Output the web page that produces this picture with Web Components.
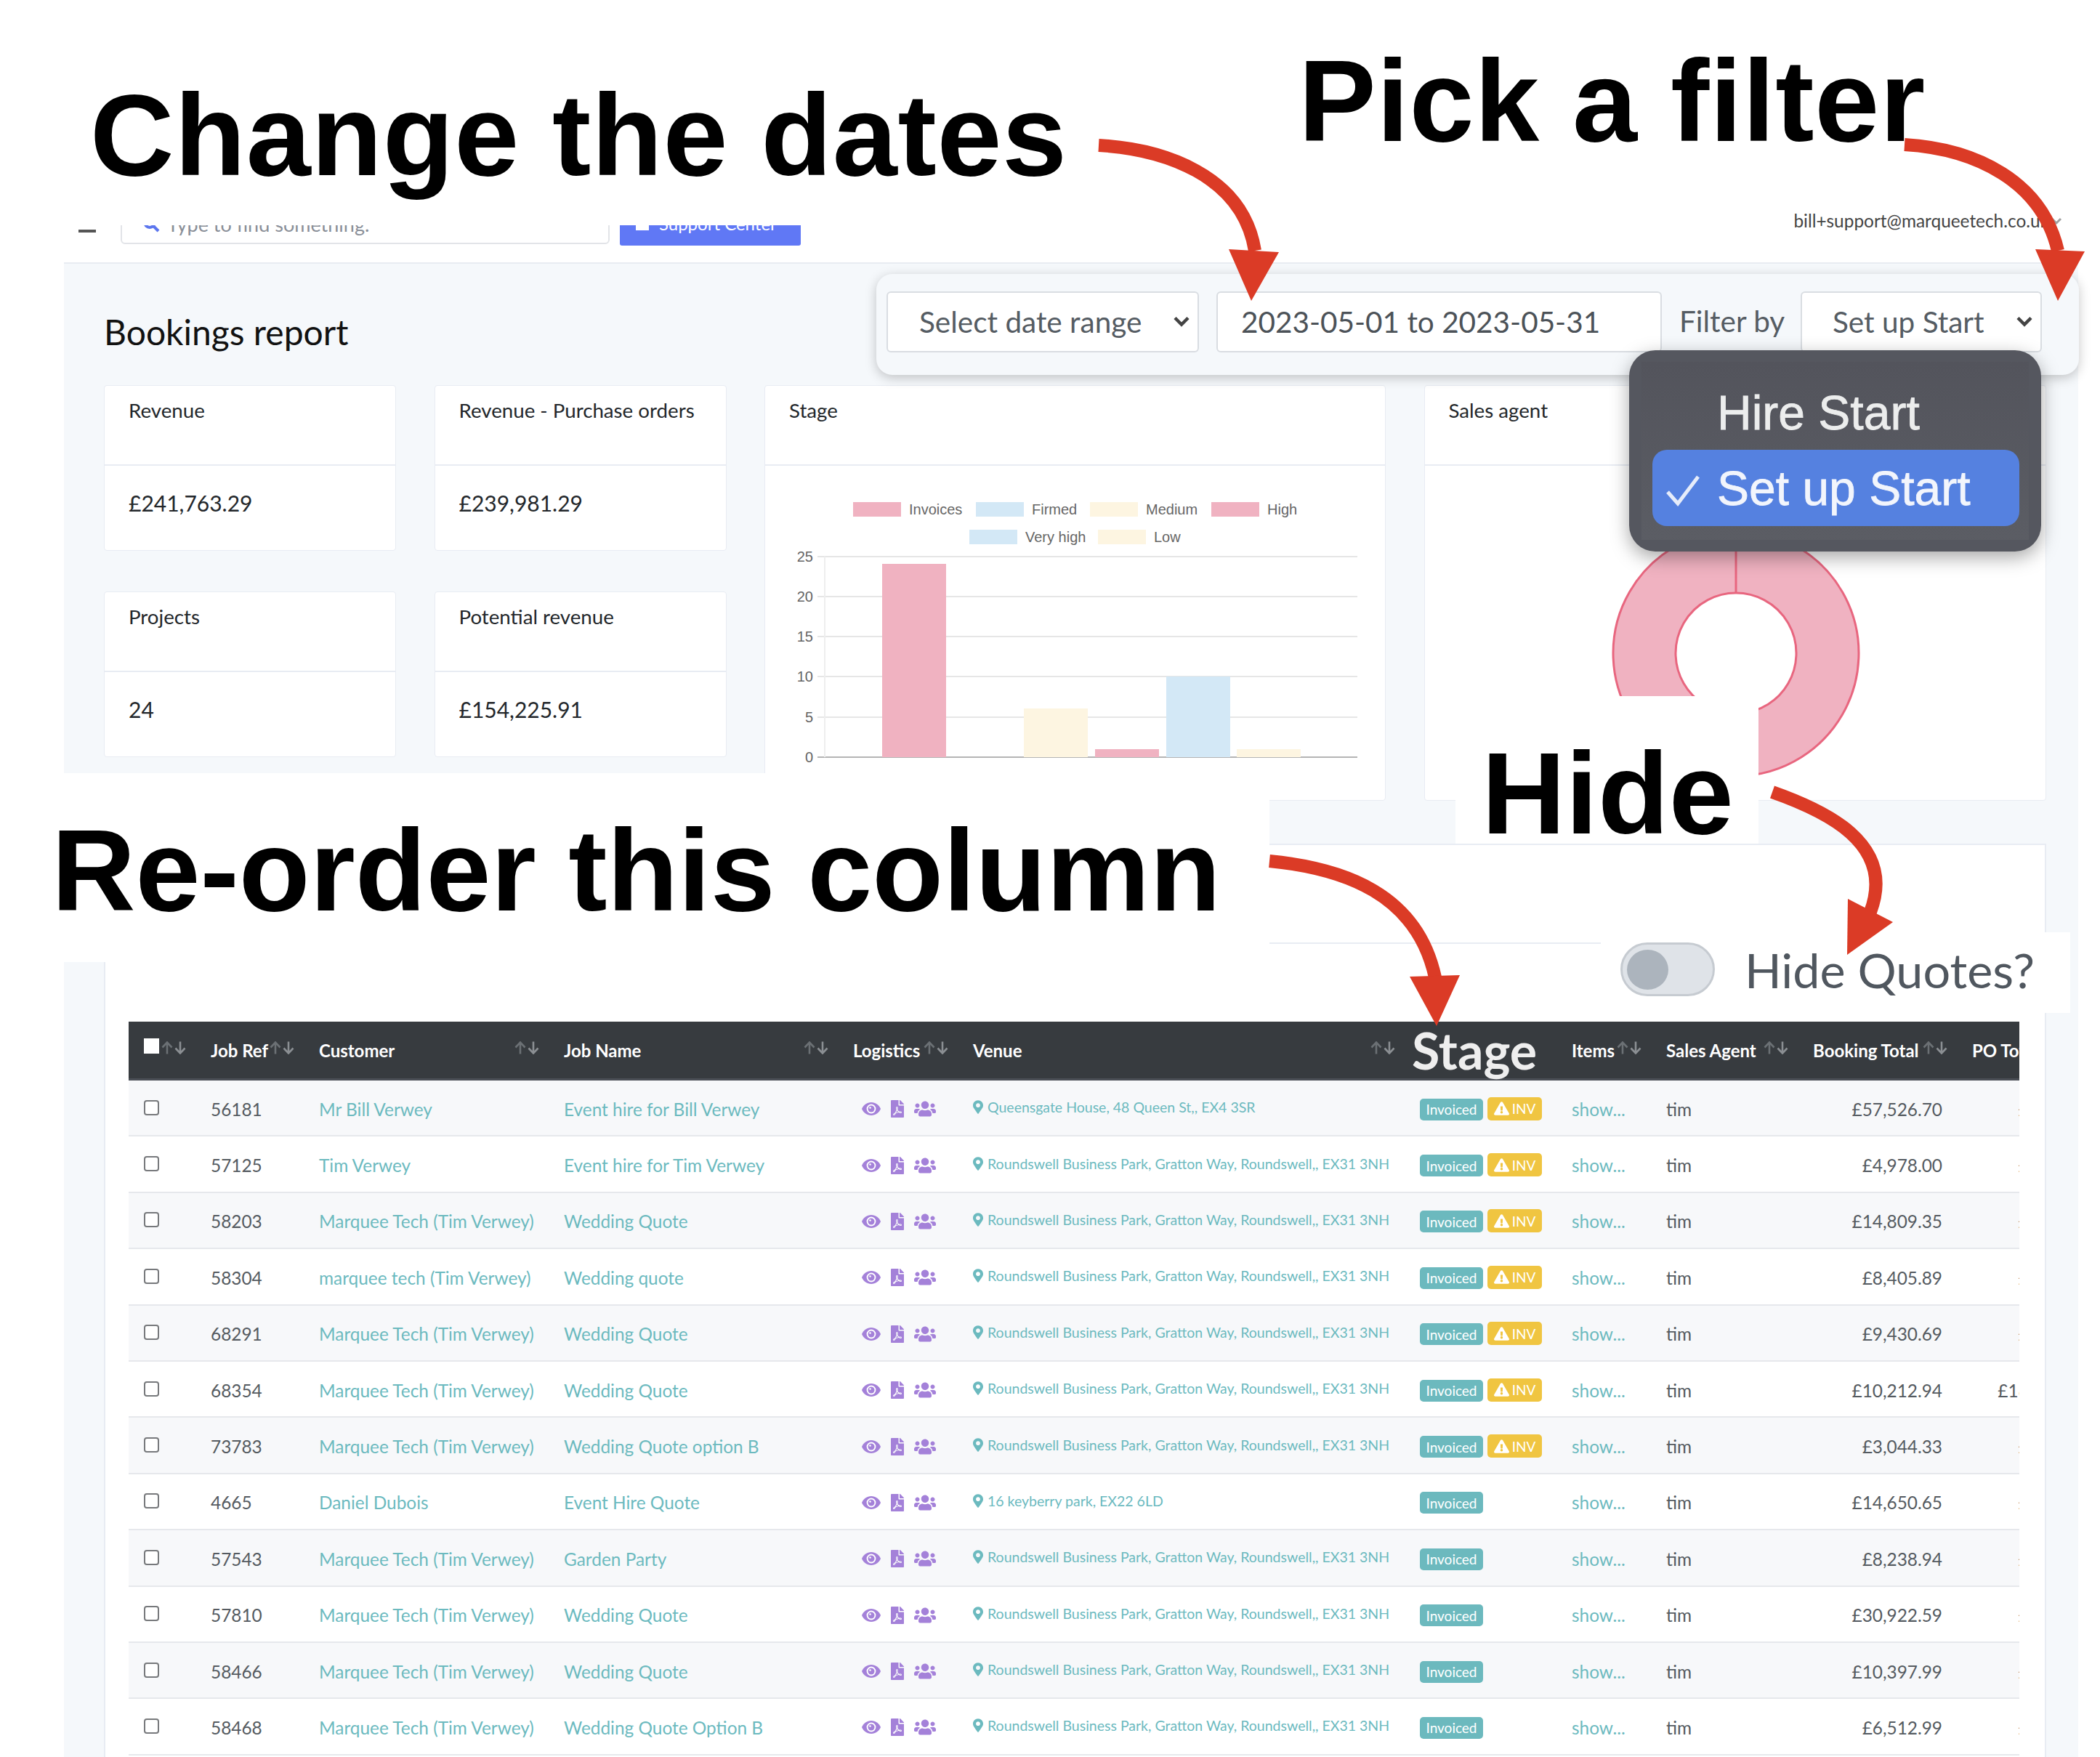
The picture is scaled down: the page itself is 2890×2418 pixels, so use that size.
<!DOCTYPE html>
<html lang="en">
<head>
<meta charset="utf-8">
<title>Bookings report</title>
<style>
    html, body { margin: 0; background: #fff; }
</style>
</head>
<body>
<report-page></report-page>
<script>
const APP_FONT = `Lato, "Noto Sans", sans-serif`;

const ICONS = {
    pdf: `<svg viewBox="0 0 384 512" width="18" height="24"><path fill="currentColor" d="M181.9 256.1c-5-16-4.9-46.9-2-46.9 8.4 0 7.6 36.9 2 46.9zm-1.7 47.2c-7.7 20.2-17.3 43.3-28.4 62.7 18.3-7 39-17.2 62.9-21.9-12.7-9.6-24.9-23.4-34.5-40.8zM86.1 428.1c0 .8 13.2-5.4 34.9-40.2-6.7 6.3-29.1 24.5-34.9 40.2zM248 160h136v328c0 13.3-10.7 24-24 24H24c-13.3 0-24-10.7-24-24V24C0 10.7 10.7 0 24 0h200v136c0 13.2 10.8 24 24 24zm-8 171.8c-20-12.2-33.3-29-42.7-53.8 4.5-18.5 11.6-46.6 6.2-64.2-4.7-29.4-42.4-26.5-47.8-6.8-5 18.3-.4 44.1 8.1 77-11.6 27.6-28.7 64.6-40.8 85.8-.1 0-.1.1-.2.1-27.1 13.9-73.6 44.5-54.5 68 5.6 6.9 16 10 21.5 10 17.9 0 35.7-18 61.1-61.8 25.8-8.5 54.1-19.1 79-23.2 21.7 11.8 47.1 19.5 64 19.5 29.2 0 31.2-32 19.7-43.4-13.9-13.6-54.3-9.7-73.6-7.2zM377 105L279 7c-4.5-4.5-10.6-7-17-7h-6v128h128v-6.1c0-6.3-2.5-12.4-7-16.9zm-74.1 255.3c4.1-2.7-2.5-11.9-42.8-9 37.1 15.8 42.8 9 42.8 9z"/></svg>`,
    eye: `<svg viewBox="0 0 26 18" width="26" height="18"><path fill="currentColor" d="M13 0C7.2 0 2.3 3.6 0 9c2.3 5.4 7.2 9 13 9s10.700-3.600 13-9C23.700 3.600 18.800 0 13 0z"/><circle cx="13" cy="9" r="6.400" fill="#fff"/><circle cx="13" cy="9" r="4.500" fill="currentColor"/><circle cx="11.500" cy="7.500" r="1.300" fill="#fff"/></svg>`,
    users: `<svg viewBox="0 0 640 512" width="30" height="24"><path fill="currentColor" d="M96 224c35.300 0 64-28.700 64-64s-28.700-64-64-64-64 28.700-64 64 28.700 64 64 64zm448 0c35.300 0 64-28.700 64-64s-28.700-64-64-64-64 28.700-64 64 28.700 64 64 64zm32 32h-64c-17.600 0-33.500 7.100-45.100 18.600 40.300 22.100 68.900 62 75.100 109.400h66c17.700 0 32-14.300 32-32v-32c0-35.300-28.700-64-64-64zm-256 0c61.900 0 112-50.100 112-112S381.900 32 320 32 208 82.100 208 144s50.100 112 112 112zm76.800 32h-8.300c-20.800 10-43.900 16-68.500 16s-47.600-6-68.500-16h-8.300C179.600 288 128 339.600 128 403.200V432c0 26.500 21.500 48 48 48h288c26.500 0 48-21.500 48-48v-28.800c0-63.600-51.600-115.200-115.200-115.200zm-223.700-13.400C161.500 263.100 145.600 256 128 256H64c-35.300 0-64 28.700-64 64v32c0 17.700 14.300 32 32 32h65.900c6.300-47.400 34.900-87.300 75.200-109.400z"/></svg>`,
    pin: `<svg viewBox="0 0 384 512" width="14" height="19"><path fill="currentColor" d="M172.268 501.670C26.970 291.031 0 268.413 0 192 0 85.961 85.961 0 192 0s192 85.961 192 192c0 76.413-26.970 99.031-172.268 309.670-9.535 13.774-29.930 13.773-39.464 0zM192 272c44.183 0 80-35.817 80-80s-35.817-80-80-80-80 35.817-80 80 35.817 80 80 80z"/></svg>`,
    warning: `<svg viewBox="0 0 576 512" width="21" height="19"><path fill="currentColor" d="M569.517 440.013C587.975 472.007 564.806 512 527.940 512H48.054c-36.937 0-59.999-40.055-41.577-71.987L246.423 24.035c18.467-32.009 64.720-31.951 83.154 0l239.940 416.066zM288 354c-25.405 0-46 20.595-46 46s20.595 46 46 46 46-20.595 46-46-20.595-46-46-46zm-43.673-165.346l7.418 136c.347 6.364 5.609 11.346 11.982 11.346h48.546c6.373 0 11.635-4.982 11.982-11.346l7.418-136c.375-6.874-5.098-12.654-11.982-12.654h-63.383c-6.884 0-12.356 5.780-11.981 12.654z"/></svg>`,
    sort: `<svg viewBox="0 0 34 18" width="34" height="18"><path d="M8 17.500V2M1.500 8.500 8 1.500l6.500 7" fill="none" stroke="#6b7074" stroke-width="2.600"/><path d="M26 .5V16M19.500 9.500 26 16.500l6.500-7" fill="none" stroke="#8b8f93" stroke-width="2.600"/></svg>`,
    chevron: `<svg viewBox="0 0 16 12" width="16" height="12"><path d="M2 3l6 6 6-6" fill="none" stroke="#444" stroke-width="3"/></svg>`
};

const COLUMNS = "92px 149px 337px 398px 165px 615px 209px 130px 202px 219px 147px";

const BOOKINGS = [
    ["56181", "Mr Bill Verwey", "Event hire for Bill Verwey", "Queensgate House, 48 Queen St,, EX4 3SR", true, "£57,526.70", "£0.00"],
    ["57125", "Tim Verwey", "Event hire for Tim Verwey", null, true, "£4,978.00", "£0.00"],
    ["58203", "Marquee Tech (Tim Verwey)", "Wedding Quote", null, true, "£14,809.35", "£0.00"],
    ["58304", "marquee tech (Tim Verwey)", "Wedding quote", null, true, "£8,405.89", "£0.00"],
    ["68291", "Marquee Tech (Tim Verwey)", "Wedding Quote", null, true, "£9,430.69", "£0.00"],
    ["68354", "Marquee Tech (Tim Verwey)", "Wedding Quote", null, true, "£10,212.94", "£188.00"],
    ["73783", "Marquee Tech (Tim Verwey)", "Wedding Quote option B", null, true, "£3,044.33", "£0.00"],
    ["4665", "Daniel Dubois", "Event Hire Quote", "16 keyberry park, EX22 6LD", false, "£14,650.65", "£0.00"],
    ["57543", "Marquee Tech (Tim Verwey)", "Garden Party", null, false, "£8,238.94", "£0.00"],
    ["57810", "Marquee Tech (Tim Verwey)", "Wedding Quote", null, false, "£30,922.59", "£0.00"],
    ["58466", "Marquee Tech (Tim Verwey)", "Wedding Quote", null, false, "£10,397.99", "£0.00"],
    ["58468", "Marquee Tech (Tim Verwey)", "Wedding Quote Option B", null, false, "£6,512.99", "£0.00"]
];
const DEFAULT_VENUE = "Roundswell Business Park, Gratton Way, Roundswell,, EX31 3NH";

class SiteHeader extends HTMLElement {
    connectedCallback() {
        const shadow = this.attachShadow({ mode: "open" });
        shadow.innerHTML = `
            <style>
                :host { display: flex; align-items: flex-end; height: 363px; box-sizing: border-box;
                    padding: 0 22px 25px 20px; border-bottom: 2px solid #e8ecf1; font-family: ${APP_FONT}; }
                .toggle { width: 24px; height: 4px; background: #555; margin: 0 34px 16px 0; }
                .search { width: 673px; height: 56px; box-sizing: border-box; border: 2px solid #e2e4e8; border-radius: 6px;
                    display: flex; align-items: center; gap: 10px; padding-left: 28px; color: #8a8f98; font-size: 27px; }
                .search svg { color: #5c76ee; }
                .support { width: 249px; height: 58px; margin: 0 0 -2px 14px; box-sizing: border-box; background: #6078f5; border-radius: 3px;
                    color: #fff; font-size: 24px; display: flex; align-items: center; gap: 14px; padding-left: 22px; padding-bottom: 3px; }
                .support i { width: 18px; height: 18px; background: #fff; }
                .user { margin: 0 0 18px auto; font-size: 24.400px; color: #444; display: flex; align-items: center; gap: 2px; }
                .user svg { opacity: .5; }
            </style>
            <div class="toggle"></div>
            <div class="search">
                <svg viewBox="0 0 24 24" width="24" height="24"><circle cx="10" cy="10" r="7" fill="none" stroke="currentColor" stroke-width="4"/><path d="M15 15l7 7" stroke="currentColor" stroke-width="4"/></svg>
                <span>Type to find something.</span>
            </div>
            <div class="support"><i></i><span>Support Center</span></div>
            <div class="user"><span>bill+support@marqueetech.co.uk</span>${ICONS.chevron}</div>
        `;
    }
}

class FilterPanel extends HTMLElement {
    connectedCallback() {
        const shadow = this.attachShadow({ mode: "open" });
        shadow.innerHTML = `
            <style>
                :host { display: flex; position: relative; z-index: 5; box-sizing: border-box; width: 1655px; height: 139px; align-items: flex-start;
                    padding: 24px 14px; background: #f5f8fb; border-radius: 22px; box-shadow: 0 4px 16px rgba(0,0,0,.22);
                    font-family: ${APP_FONT}; font-size: 40.500px; color: #555c63; }
                .field { height: 84px; box-sizing: border-box; background: #fff; border: 2px solid #d9dde2; border-radius: 6px;
                    display: flex; align-items: center; justify-content: space-between; padding-bottom: 2px; }
                .field svg { width: 26px; height: 18px; }
                .range { width: 430px; padding-left: 43px; padding-right: 9px; }
                .dates { width: 613px; margin-left: 24px; padding-left: 32px; color: #4c5258; }
                .label { margin-left: 24px; width: 167px; height: 82px; line-height: 82px; }
                .filter { width: 332px; padding-left: 42px; padding-right: 9px; }
                .menu { position: absolute; left: 1036px; top: 105px; width: 567px; height: 277px; box-sizing: border-box;
                    background: #55575f; border-radius: 36px; box-shadow: 0 8px 26px rgba(0,0,0,.35); padding: 40px 30px 0 32px;
                    font-family: "Liberation Sans", sans-serif; font-size: 66px; color: #eceded; -webkit-text-stroke: .8px; filter: blur(.6px); }
                .menu::before { content: ""; position: absolute; inset: 16px 17px; background: linear-gradient(#53545c, #5b5d64); z-index: -1; }
                .option { height: 97px; padding-left: 89px; line-height: 92px; }
                .current { height: 105px; line-height: 106px; background: #5581e0; border-radius: 20px; color: #f2f5fc; position: relative; }
                .current svg { position: absolute; left: 18px; top: 34px; }
            </style>
            <div class="field range"><span>Select date range</span>${ICONS.chevron}</div>
            <div class="field dates">2023-05-01 to 2023-05-31</div>
            <div class="label">Filter by</div>
            <div class="field filter"><span>Set up Start</span>${ICONS.chevron}</div>
            <div class="menu">
                <div class="option">Hire Start</div>
                <div class="option current">
                    <svg viewBox="0 0 48 44" width="48" height="44"><path d="M3 24l14 16L45 3" fill="none" stroke="#e6ecfa" stroke-width="5"/></svg>
                    Set up Start
                </div>
            </div>
        `;
    }
}

class ReportCard extends HTMLElement {
    connectedCallback() {
        const shadow = this.attachShadow({ mode: "open" });
        shadow.innerHTML = `
            <style>
                :host { display: block; box-sizing: border-box; background: #fff; border: 1px solid #e8ecf3; border-radius: 4px;
                    font-family: ${APP_FONT}; font-size: 27.700px; color: #23272b; }
                .head { height: 110px; box-sizing: border-box; padding: 18px 33px; line-height: 32px; border-bottom: 2px solid #e8ecf3; }
                .body { position: relative; }
                ::slotted(.value) { padding: 35px 33px 0; line-height: 32px; font-size: 30px; }
            </style>
            <div class="head">${this.getAttribute("title")}</div>
            <div class="body"><slot></slot></div>
        `;
    }
}

class StageChart extends HTMLElement {
    connectedCallback() {
        const shadow = this.attachShadow({ mode: "open" });
        const cream = "#fdf5e1";
        const legend = [
            [1174, 692, "#f0b2c1", "Invoices"], [1343, 692, "#d3e8f6", "Firmed"], [1500, 692, cream, "Medium"], [1667, 692, "#f0b2c1", "High"],
            [1334, 730, "#d3e8f6", "Very high"], [1511, 730, cream, "Low"]
        ];
        const ticks = [[25, 767], [20, 822], [15, 877], [10, 932], [5, 988], [0, 1043]];
        const bars = [[1214, 777, "#f0b2c1"], [1409, 976, cream], [1507, 1032, "#f0b2c1"], [1605, 932, "#d3e8f6"], [1702, 1032, cream]];
        shadow.innerHTML = `
            <style>
                :host { display: block; }
                svg { display: block; }
                text { font-family: "Liberation Sans", sans-serif; font-size: 20px; fill: #666; }
            </style>
            <svg viewBox="1053 642 852 460" width="852" height="460">
                ${legend.map(([x, y, fill, label]) => `<rect x="${x}" y="${y}" width="66" height="20" fill="${fill}"/><text x="${x + 77}" y="${y + 17}">${label}</text>`).join("")}
                ${ticks.map(([n, y]) => `<line x1="1125" x2="1868" y1="${y}" y2="${y}" stroke="${n ? "#e6e6e6" : "#b4b4b4"}" stroke-width="2"/><text x="1119" y="${y + 7}" text-anchor="end">${n}</text>`).join("")}
                <line x1="1135" x2="1135" y1="767" y2="1043" stroke="#eee" stroke-width="2"/>
                ${bars.map(([x, y, fill]) => `<rect x="${x}" y="${y}" width="88" height="${1043 - y}" fill="${fill}"/>`).join("")}
            </svg>
        `;
    }
}

class AgentDonut extends HTMLElement {
    connectedCallback() {
        const shadow = this.attachShadow({ mode: "open" });
        shadow.innerHTML = `
            <style>
                :host { display: block; }
                svg { display: block; }
            </style>
            <svg viewBox="1960 642 854 460" width="854" height="460">
                <path fill="#f0b2c1" stroke="#e8667f" stroke-width="3" fill-rule="evenodd"
                    d="M2388 731a169 169 0 1 0 .01 0zM2388 817a83 83 0 1 1-.01 0z"/>
                <line x1="2388" x2="2388" y1="731" y2="817" stroke="#e8667f" stroke-width="3"/>
            </svg>
        `;
    }
}

class BookingRow extends HTMLElement {
    connectedCallback() {
        const shadow = this.attachShadow({ mode: "open" });
        const [ref, customer, job, venue, unpaid, total, po] = this.booking;
        shadow.innerHTML = `
            <style>
                :host { display: grid; grid-template-columns: ${COLUMNS}; height: 77.400px; box-sizing: border-box; align-items: center;
                    border-bottom: 2px solid #e6e8ec; font-size: 24.400px; color: #555b61; }
                :host(:nth-child(odd)) { background: #f7f8fa; }
                .cell { padding-left: 21px; white-space: nowrap; }
                .text { padding-top: 3px; }
                .link { color: #6cbabf; }
                .box { width: 21px; height: 21px; box-sizing: border-box; border: 2px solid #77797c; border-radius: 4px; background: #fff; margin: -1px 0 0 21px; }
                .icons { display: flex; align-items: center; gap: 14px; padding-left: 33px; color: #a481d9; margin-top: 3px; }
                .venue { display: flex; align-items: center; gap: 6px; font-size: 19.500px; color: #6cbabf; margin-top: -2px; }
                .venue svg { flex: none; }
                .stage { display: flex; align-items: center; gap: 6px; margin-top: 4px; }
                .tag { height: 30px; box-sizing: border-box; border-radius: 5px; color: #fff; font-size: 19px; display: flex; align-items: center; justify-content: center; }
                .invoiced { width: 87px; background: #6cb9be; }
                .inv { width: 75px; height: 32px; margin-top: -2px; gap: 4px; background: #f0c541; }
                .amount { text-align: right; padding-right: 20px; }
                .po { text-align: right; }
            </style>
            <div><div class="box"></div></div>
            <div class="cell text">${ref}</div>
            <div class="cell text link">${customer}</div>
            <div class="cell text link">${job}</div>
            <div class="icons">${ICONS.eye}${ICONS.pdf}${ICONS.users}</div>
            <div class="cell venue">${ICONS.pin}<span>${venue || DEFAULT_VENUE}</span></div>
            <div class="cell stage">
                <span class="tag invoiced">Invoiced</span>
                ${unpaid ? `<span class="tag inv">${ICONS.warning}INV</span>` : ""}
            </div>
            <div class="cell text link">show...</div>
            <div class="cell text">tim</div>
            <div class="amount text">${total}</div>
            <div class="po text">${po}</div>
        `;
    }
}

class BookingsTable extends HTMLElement {
    connectedCallback() {
        const shadow = this.attachShadow({ mode: "open" });
        const sorted = (label) => `<div class="th"><span>${label}</span>${ICONS.sort}</div>`;
        shadow.innerHTML = `
            <style>
                :host { display: block; overflow: hidden; font-family: ${APP_FONT}; }
                .head { display: grid; grid-template-columns: ${COLUMNS}; height: 81px; box-sizing: border-box; background: #373b3f;
                    border-bottom: 3px solid #4a4e55; color: #fff; font-size: 24px; font-weight: 700; }
                .th { display: flex; align-items: center; justify-content: space-between; padding: 0 13px 0 21px; white-space: nowrap; }
                .th svg { margin-top: -6px; }
                .check { width: 21px; height: 21px; background: #fff; margin-top: -12px; }
                .stage { padding-left: 10px; font-size: 70px; font-weight: 700; color: #eee; filter: blur(.7px); display: flex; align-items: center; height: 78px; }
                .rows { display: flex; flex-direction: column; }
            </style>
            <div class="head">
                <div class="th"><div class="check"></div>${ICONS.sort}</div>
                ${sorted("Job Ref")}${sorted("Customer")}${sorted("Job Name")}${sorted("Logistics")}
                <div class="th"><span>Venue</span>${ICONS.sort}</div>
                <div class="stage">Stage</div>
                ${sorted("Items")}${sorted("Sales Agent")}${sorted("Booking Total")}
                <div class="th"><span>PO Total</span></div>
            </div>
            <div class="rows"></div>
        `;
        const rows = shadow.querySelector(".rows");
        BOOKINGS.forEach((booking) => {
            const row = document.createElement("booking-row");
            row.booking = booking;
            rows.appendChild(row);
        });
    }
}

// annotation text and the white patches pasted over the screenshot
class CallOut extends HTMLElement {
    connectedCallback() {
        const shadow = this.attachShadow({ mode: "open" });
        const px = (name) => `${this.getAttribute(name)}px`;
        shadow.innerHTML = `
            <style>
                :host { position: absolute; left: ${px("x")}; top: ${px("y")}; width: ${px("w")}; height: ${px("h")}; background: #fff; display: block; }
                span { position: absolute; left: ${px("tx")}; top: ${this.getAttribute("ty") - 135}px; white-space: nowrap;
                    letter-spacing: ${this.getAttribute("ls") || 0}px;
                    font: bold 160px/160px "Liberation Sans", Arial, sans-serif; color: #000; }
            </style>
            <span><slot></slot></span>
        `;
    }
}

class HideQuotes extends HTMLElement {
    connectedCallback() {
        const shadow = this.attachShadow({ mode: "open" });
        shadow.innerHTML = `
            <style>
                :host { position: absolute; left: 2203px; top: 1283px; width: 646px; height: 111px; background: #fff;
                    display: flex; align-items: flex-start; box-sizing: border-box; padding: 14px 0 0 27px; gap: 41px;
                    font-family: ${APP_FONT}; font-size: 66.500px; color: #50575f; }
                .track { width: 130px; height: 74px; box-sizing: border-box; background: #dfe3e8; border: 3px solid #c6cbd1; border-radius: 37px; padding: 7px 0 0 6px; filter: blur(.7px); }
                .knob { width: 57px; height: 55px; border-radius: 50%; background: #acb4bd; }
                span { line-height: 74px; filter: blur(.6px); }
            </style>
            <div class="track"><div class="knob"></div></div>
            <span>Hide Quotes?</span>
        `;
    }
}

class ArrowLayer extends HTMLElement {
    connectedCallback() {
        const shadow = this.attachShadow({ mode: "open" });
        const curves = [
            "M1512 200C1600 205 1710 240 1727 345",
            "M2621 199C2720 205 2810 250 2832 345",
            "M1747 1185C1850 1195 1950 1230 1975 1345",
            "M2439 1090C2510 1115 2610 1160 2574 1255"
        ];
        const heads = ["1691,343 1760,347 1722,414", "2801,343 2869,346 2832,414", "1940,1344 2009,1342 1977,1412", "2543,1237 2605,1269 2542,1314"];
        shadow.innerHTML = `
            <style>
                :host { position: absolute; left: 0; top: 0; display: block; pointer-events: none; z-index: 6; }
                svg { display: block; }
            </style>
            <svg viewBox="0 0 2890 2418" width="2890" height="2418">
                ${curves.map((d) => `<path d="${d}" fill="none" stroke="#db3b26" stroke-width="18"/>`).join("")}
                ${heads.map((points) => `<polygon points="${points}" fill="#db3b26"/>`).join("")}
            </svg>
        `;
    }
}

class ReportPage extends HTMLElement {
    connectedCallback() {
        const shadow = this.attachShadow({ mode: "open" });
        shadow.innerHTML = `
            <style>
                :host { display: block; position: relative; width: 2890px; height: 2418px; overflow: hidden; background: #fff; }
                .app { width: 2772px; margin-left: 88px; display: flex; flex-direction: column; height: 2418px; }
                .content { flex: 1; background: #f5f8fb; padding: 0 44px 0 55px; min-height: 0; }
                .top { display: flex; justify-content: space-between; align-items: flex-start; height: 167px; padding-top: 14px; box-sizing: border-box; margin-right: -45px; }
                h1 { margin: 52px 0 0; font: 400 48px/56px ${APP_FONT}; color: #111; }
                .grid { display: grid; grid-template-columns: 402px 402px 855px 856px; column-gap: 52.500px; align-items: start; }
                .stats { grid-column: 1 / 3; display: grid; grid-template-columns: 402px 402px; gap: 56px 52.500px; }
                .stats report-card { height: 228px; }
                .tall { height: 572px; }
                .table-card { margin-top: 59px; background: #fff; border: 2px solid #e8ecf3; border-bottom: 0; box-sizing: border-box; height: 1257px; padding: 0 35px 0 32px; }
                .table-top { height: 134px; border-bottom: 2px solid #e8ecf3; margin: 0 -35px 107px -32px; }
            </style>
            <div class="app">
                <site-header></site-header>
                <div class="content">
                    <div class="top">
                        <h1>Bookings report</h1>
                        <filter-panel></filter-panel>
                    </div>
                    <div class="grid">
                        <div class="stats">
                            <report-card title="Revenue"><div class="value">£241,763.29</div></report-card>
                            <report-card title="Revenue - Purchase orders"><div class="value">£239,981.29</div></report-card>
                            <report-card title="Projects"><div class="value">24</div></report-card>
                            <report-card title="Potential revenue"><div class="value">£154,225.91</div></report-card>
                        </div>
                        <report-card class="tall" title="Stage"><stage-chart></stage-chart></report-card>
                        <report-card class="tall" title="Sales agent"><agent-donut></agent-donut></report-card>
                    </div>
                    <div class="table-card">
                        <div class="table-top"></div>
                        <bookings-table></bookings-table>
                    </div>
                </div>
            </div>
            <call-out x="0" y="0" w="1110" h="310" tx="124" ty="241" ls="0.7">Change the dates</call-out>
            <call-out x="1787" y="0" w="0" h="0" tx="0" ty="194" ls="0.7">Pick a filter</call-out>
            <call-out x="0" y="1064" w="1747" h="260" tx="71" ty="189">Re-order this column</call-out>
            <call-out x="2003" y="958" w="417" h="203" tx="36" ty="189">Hide</call-out>
            <hide-quotes></hide-quotes>
            <arrow-layer></arrow-layer>
        `;
    }
}

customElements.define("site-header", SiteHeader);
customElements.define("filter-panel", FilterPanel);
customElements.define("report-card", ReportCard);
customElements.define("stage-chart", StageChart);
customElements.define("agent-donut", AgentDonut);
customElements.define("booking-row", BookingRow);
customElements.define("bookings-table", BookingsTable);
customElements.define("call-out", CallOut);
customElements.define("hide-quotes", HideQuotes);
customElements.define("arrow-layer", ArrowLayer);
customElements.define("report-page", ReportPage);
</script>
</body>
</html>
